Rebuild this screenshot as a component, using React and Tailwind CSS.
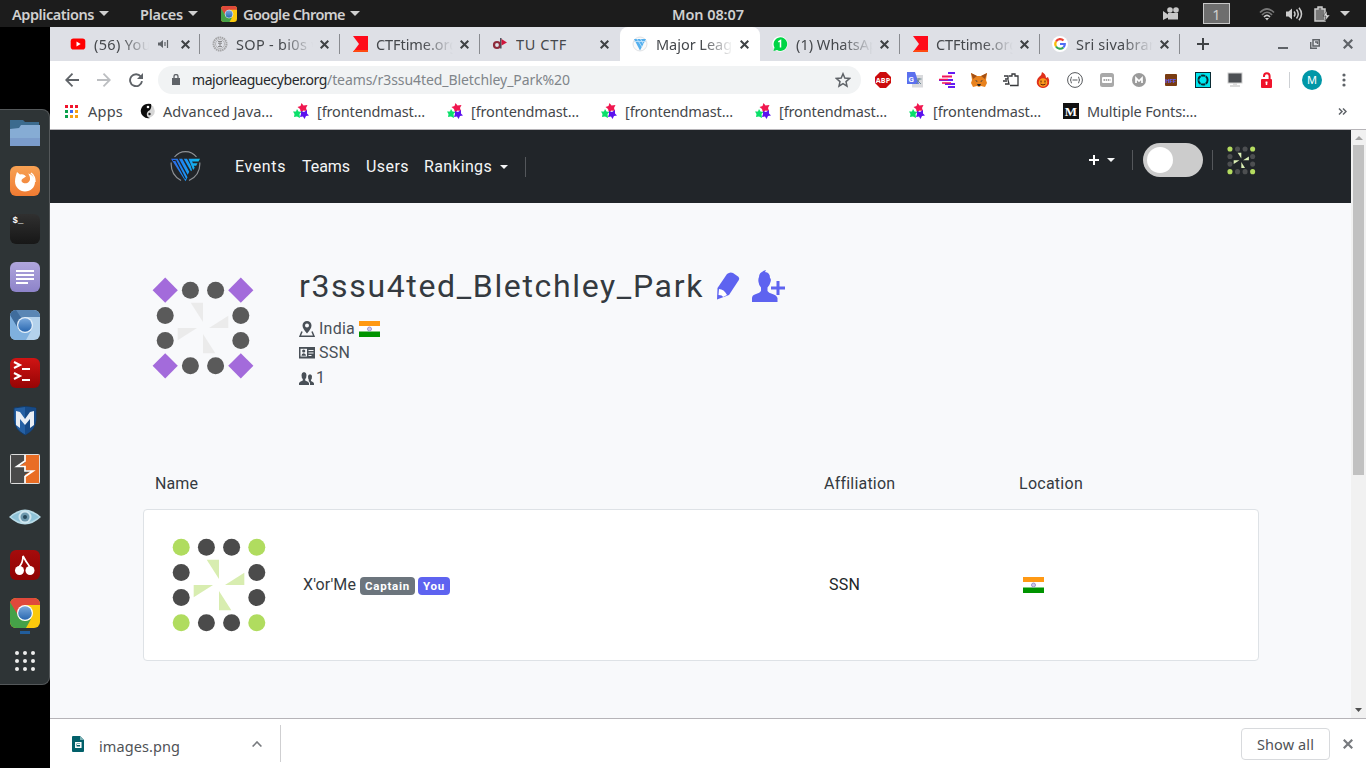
import { useLayoutEffect, useRef, useState } from "react";

/* Text tracked so that it spans the given width. */
function Fit({ w, className = "", children }) {
  const ref = useRef(null);
  const [ls, setLs] = useState(0);
  useLayoutEffect(() => {
    const natural = ref.current.getBoundingClientRect().width;
    const n = ref.current.textContent.length;
    setLs((prev) => prev + (w - natural) / n);
  }, [w]);
  return (
    <span className={"block shrink-0 whitespace-pre " + className} style={{ width: w }}>
      <span ref={ref} className="inline-block" style={{ letterSpacing: ls + "px" }}>{children}</span>
    </span>
  );
}

const Caret = ({ className = "", w = 10, h = 5 }) => (
  <svg className={"shrink-0 " + className} width={w} height={h} viewBox="0 0 10 5" preserveAspectRatio="none" fill="currentColor"><path d="M0 0h10L5 5z" /></svg>
);

const Cross = ({ size = 9, className = "", sw = 2 }) => (
  <svg className={"shrink-0 " + className} width={size} height={size} viewBox="0 0 9 9" stroke="currentColor" strokeWidth={sw} fill="none"><path d="M.7.7l7.6 7.6M8.3.7L.7 8.3" /></svg>
);

function ChromeLogo({ size, blue = false, id }) {
  const [r, g, y] = blue ? ["#5a86b4", "#7fb0de", "#b4d2ec"] : ["#e0493b", "#45a148", "#fbc90c"];
  return (
    <svg width={size} height={size} viewBox="0 0 30 30" className="shrink-0">
      <defs>
        <clipPath id={id}><rect width="30" height="30" rx="6" /></clipPath>
        <linearGradient id={id + "g"} x1="0" y1="0" x2="0" y2="1"><stop offset="0" stopColor="#7aa9dc" /><stop offset="1" stopColor="#2a68b0" /></linearGradient>
      </defs>
      <g clipPath={`url(#${id})`}>
        <rect width="30" height="30" fill={y} />
        <path d="M0 0h30v7H15L8 18 0 6z" fill={r} />
        <path d="M0 4l8.500 14L15 23l6-2-5 9H0z" fill={g} />
        {blue && <path d="M0 5l9 15 3-11L6 0H0z" fill="#3f6c9c" />}
      </g>
      <circle cx="15" cy="15" r="8" fill={blue ? "#e4eff9" : "#fff"} />
      <circle cx="15" cy="15" r="6.800" fill={`url(#${id}g)`} />
    </svg>
  );
}

function Identicon({ size, corner, dot, blade, diamond }) {
  const edge = [-37.800, -12.600, 12.600, 37.800];
  const cells = [];
  edge.forEach((x, i) => edge.forEach((y, j) => {
    const ci = i % 3 === 0, cj = j % 3 === 0;
    if (!ci && !cj) return;
    cells.push(ci && cj && diamond
      ? <path key={x + "," + y} d={`M${x} ${y - 12.6}l12.600 12.600l-12.600 12.600l-12.600 -12.600z`} fill={corner} />
      : <circle key={x + "," + y} cx={x} cy={y} r="8.500" fill={ci && cj ? corner : dot} />);
  }));
  return (
    <svg width={size} height={size} viewBox="-51 -51 102 102" className="shrink-0">
      {cells}
      {[0, 90, 180, 270].map((a) => <path key={a} d="M-12.300 -25.300H0V-6z" fill={blade} transform={`rotate(${a})`} />)}
    </svg>
  );
}

const Flag = ({ className = "" }) => (
  <svg width="21" height="16" viewBox="0 0 21 16" className={"shrink-0 " + className}>
    <rect width="21" height="16" fill="#fff" />
    <rect width="21" height="5" fill="#ff9914" />
    <rect y="10.500" width="21" height="5.500" fill="#009400" />
    <circle cx="10.500" cy="8" r="2" fill="#cfcae8" stroke="#9d94cf" strokeWidth="1" />
  </svg>
);

/* ---------- desktop panel ---------- */
function TopBar() {
  return (
    <div className="flex h-[27px] shrink-0 items-center bg-[#1c1c1c] pl-3 text-[14.500px] font-semibold text-[#d0d0d0]">
      <Fit w={82}>Applications</Fit><Caret className="ml-[5px]" />
      <Fit w={43} className="ml-[31px]">Places</Fit><Caret className="ml-[5px] mr-[23px]" />
      <ChromeLogo size={16} id="ct" />
      <Fit w={102} className="ml-[6px]">Google Chrome</Fit><Caret className="ml-[5px]" />
      <Fit w={72} className="ml-[312px]">Mon 08:07</Fit>
      <svg width="16" height="14" viewBox="0 0 16 14" fill="#c8c8c8" className="ml-[419px]"><circle cx="7" cy="3" r="2.800" /><circle cx="13" cy="3" r="2.800" /><path d="M5 6h10v6.500H5zM0 4l5 3.500v3L0 13z" /></svg>
      <div className="ml-6 flex h-[21px] w-[27px] items-center justify-center border border-[#c8c8c8] bg-[#6e6e6e] font-normal">1</div>
      <svg width="16" height="14" viewBox="0 0 16 14" fill="none" strokeWidth="1.700" className="ml-[29px]"><path d="M1 5.500Q8-1.500 15 5.500M3 8Q8 2.500 13 8" stroke="#777" /><path d="M5 10Q8 6.800 11 10" stroke="#ccc" /><path d="M6 11h4l-2 2.500z" fill="#ccc" /></svg>
      <svg width="17" height="14" viewBox="0 0 17 14" fill="none" stroke="#ccc" strokeWidth="1.500" className="ml-[11px]"><path d="M0 4.500h2.500L6 1.500v11L2.500 9.500H0z" fill="#ccc" stroke="none" /><path d="M8 4.500q2 2.500 0 5M10.500 2.500q3.500 4.500 0 9M13 .700q5 6.300 0 12.600" /></svg>
      <svg width="16" height="16" viewBox="0 0 16 16" className="ml-[11px]"><path d="M1 3h3V1h4v2h3v12H1z" fill="#777" stroke="#ccc" strokeWidth="1.500" /><path d="M13 5l-4 5h3l-1 5 5-6h-3z" fill="#ddd" stroke="#1c1c1c" strokeWidth=".5" /></svg>
      <Caret className="ml-[10px]" />
    </div>
  );
}

function Dock() {
  const box = "flex size-[30px] items-start overflow-hidden rounded-[6px]";
  return (
    <div className="flex w-[50px] shrink-0 flex-col bg-black pt-[82px]">
      <div className="flex h-[576px] flex-col items-center gap-[18px] rounded-r-lg border-y border-r border-[#54585a] bg-[#2e3436] pt-[8px]">
        <svg width="30" height="30" viewBox="0 0 30 30"><path d="M0 2h13l2 2h14v10H0z" fill="#3c6b8e" /><path d="M0 11l9-1 2-3h19v21H0z" fill="#86acd4" /><path d="M0 20h30v8H0z" fill="#7b9ccb" /></svg>
        <div className={box + " bg-linear-to-b from-[#f7a153] to-[#f07b32]"}>
          <svg width="30" height="30" viewBox="0 0 30 30"><path d="M7 6l3 2.500c3-1 5 .5 6 2l-3 2c-2 1-2 3.500.5 4.500 3.500 1 7-1 6.500-5-.3-2-1-3.500-2-4.500 4 1 7 4 7 8.500 0 5.500-4.500 9.500-10 9.500S5 21 5 15.500C5 12 6 9 7 6z" fill="#fff" /><path d="M21 7q4 3 4 9" stroke="#fff" strokeWidth="1.500" fill="none" /></svg>
        </div>
        <div className={box + " bg-linear-to-b from-[#303030] to-[#171717] pl-[3px] pt-[2px] font-['Liberation_Mono'] text-[9px] font-bold leading-[10px] text-white"}>$_</div>
        <div className={box + " flex-col gap-[2px] bg-linear-to-b from-[#b0a6dc] to-[#8d83c9] pl-[6px] pt-[8px]"}>
          <i className="h-[2px] w-[18px] bg-white" /><i className="h-[2px] w-[18px] bg-white" /><i className="h-[2px] w-[18px] bg-white" /><i className="h-[2px] w-3 bg-white" />
        </div>
        <ChromeLogo size={30} blue id="cb" />
        <div className={box + " bg-linear-to-b from-[#d01414] to-[#960505]"}>
          <svg width="30" height="30" viewBox="0 0 30 30" fill="none" stroke="#fff" strokeWidth="2"><path d="M4 4l6 3-6 3M12 11h8M4 15l6 3-6 3M12 22h8" /></svg>
        </div>
        <svg width="30" height="30" viewBox="0 0 30 30"><path d="M4 2q11-3 22 0v12q-1 10-11 15Q5 24 4 14z" fill="#2560a4" stroke="#133b68" /><path d="M15 1q6 0 11 1v12q-1 10-11 15z" fill="#174a87" /><path d="M6 19V5l4 1 5 7 5-7 4-1v14l-4 3v-9l-5 6-5-6v9z" fill="#e9eef5" /></svg>
        <svg width="30" height="30" viewBox="0 0 30 30"><rect x=".5" y=".5" width="29" height="29" rx="1" fill="#4a4a4a" /><path d="M15 .5h14.500v29H15v-9l7-4h-6l-1-4H9l6-4z" fill="#e96d25" /><path d="M15 1v6l-8 5.500h8V17h8l-8 5.500V29" fill="none" stroke="#fff" strokeWidth="1.700" /><rect x=".5" y=".5" width="29" height="29" rx="1" fill="none" stroke="#ddd" /></svg>
        <svg width="32" height="30" viewBox="0 0 32 30"><path d="M0 15Q16 0 32 15Q16 30 0 15z" fill="#b9dce8" /><path d="M2 15Q16 4 30 15Q16 26 2 15z" fill="#8fc3d8" /><circle cx="16" cy="15" r="6.500" fill="#cfe6ef" /><circle cx="16" cy="15" r="4.500" fill="#6d98ad" /><circle cx="16" cy="15" r="2" fill="#284a5c" /></svg>
        <div className={box + " bg-linear-to-b from-[#a50c0c] to-[#8f0303]"}>
          <svg width="30" height="30" viewBox="0 0 30 30"><path d="M9 17q4-4 4-11q3 6 7 11" fill="none" stroke="#fff" strokeWidth="1.700" /><circle cx="9.500" cy="20.500" r="4.500" fill="#fff" /><circle cx="20" cy="20.500" r="4.500" fill="#fff" /></svg>
        </div>
        <div className="relative size-[30px]">
          <ChromeLogo size={30} id="cd" />
          <i className="absolute left-[10px] top-[33px] h-[3px] w-[10px] bg-[#215d9c]" />
        </div>
        <div className="grid size-[30px] grid-cols-[repeat(3,4px)] place-content-center gap-[4px]">
          {Array.from({ length: 9 }, (_, i) => <i key={i} className="size-[4px] rounded-full bg-[#eee]" />)}
        </div>
      </div>
    </div>
  );
}

/* ---------- favicons ---------- */
const YouTube = () => <svg width="16" height="16" viewBox="0 0 16 16"><rect x=".7" y="2.500" width="14.600" height="11" rx="2.800" fill="#f00" /><path d="M6.500 5.500v5L10.700 8z" fill="#fff" /></svg>;
const Sop = () => <svg width="16" height="16" viewBox="0 0 16 16" fill="none"><circle cx="8" cy="8" r="6.500" stroke="#a4a4a6" strokeWidth="2" strokeDasharray="1.500 .6" /><circle cx="8" cy="8" r="4.500" stroke="#b5b5b7" /><path d="M6 5.500h4M8 5v6M6 10.500h4M6 7l2 1 2-1" stroke="#8c8c8e" /></svg>;
const CtfTime = () => <svg width="16" height="16" viewBox="0 0 16 16"><path d="M1 0h15v16H1l6-8z" fill="#ff0a1a" /><path d="M2.500 14H16v2H1z" fill="#ff4a12" /></svg>;
const Tu = () => <svg width="16" height="16" viewBox="0 0 16 16"><circle cx="5" cy="9" r="3" fill="none" stroke="#8d2a3a" strokeWidth="2.200" /><path d="M8.800 2v10.500" stroke="#4b4b55" strokeWidth="1.500" /><path d="M9.500 3l5.500 3.500-5.500 3z" fill="#d0163c" /></svg>;
const Mlc = () => <svg width="16" height="16" viewBox="0 0 16 16"><circle cx="8" cy="8" r="7" fill="#fafafa" stroke="#d8dade" strokeWidth=".8" /><path d="M2 3h12L8 14.500z" fill="#55b0ee" /><path d="M5 3l5 8M8.500 3l3 5M2 5.500h12" stroke="#bfe0f8" strokeWidth=".9" /></svg>;
const WhatsApp = () => <svg width="16" height="16" viewBox="0 0 16 16"><circle cx="8" cy="8" r="7.800" fill="#fff" /><path d="M1.500 15l1-3.500A6.800 6.800 0 1 1 5 14z" fill="#00d546" /><path d="M6.300 5.800L8.500 4.500v7" stroke="#fff" strokeWidth="1.500" fill="none" /></svg>;
const Google = () => <svg width="16" height="16" viewBox="0 0 16 16" fill="none" strokeWidth="2.200"><circle cx="8" cy="8" r="8" fill="#fff" /><path d="M11.500 4.500A4.800 4.800 0 0 0 4 5.500" stroke="#ea4335" /><path d="M4 5.500a4.800 4.800 0 0 0 0 5" stroke="#fbbc05" /><path d="M4 10.500a4.800 4.800 0 0 0 7.300 1" stroke="#34a853" /><path d="M11.300 11.500A4.500 4.500 0 0 0 12.800 8H8" stroke="#4f6df5" /></svg>;
const StarMark = () => (
  <svg width="16" height="16" viewBox="0 0 16 16" className="shrink-0">
    <path id="s" d="M8.500 0l2 2.500 4-.5-1.500 3 1 3-3.500-.5L8 9.500 7 6 4.500 4l3-1z" fill="#f0174f" />
    <path d="M4 6l1.500 2.500 3 .5-2 2 .5 4-3-1.500L1 14l.5-3L0 8.500 3 8.500z" fill="#0be06a" />
    <path d="M8 8l3 1 3-2v3.500l2 2-3 .5-1.500 3-1.500-2.500L7 14l1-3z" fill="#5b12ee" />
  </svg>
);

function Tab({ icon, text, w, active, sound, sep, first }) {
  return (
    <div className={"flex h-[34px] w-[140px] shrink-0 items-center " + (active ? "rounded-t-lg bg-white " : "") + (first ? "pl-[10px]" : "pl-[12px]")}>
      <div className="size-4 shrink-0">{icon}</div>
      <div className={"ml-2 shrink-0 overflow-hidden " + (sound ? "w-[55px] mask-r-from-50%" : text === "TU CTF" ? "w-[77px]" : "w-[77px] mask-r-from-60%")}><Fit w={w}>{text}</Fit></div>
      {sound && <svg width="11" height="10" viewBox="0 0 11 10" className="ml-[9px] mr-[12px] shrink-0" stroke="#5f6368" strokeWidth="1.200" fill="none"><path d="M0 3.500h2L5 1v8L2 6.500H0z" fill="#5f6368" stroke="none" /><path d="M7 3v4M9.500 1v8" /></svg>}
      <Cross className={"text-[#3f4245] " + (sound ? "" : "ml-[7px]")} />
      {sep && <i className="ml-auto h-5 w-px bg-[#898b90]" />}
    </div>
  );
}

function TabStrip() {
  return (
    <div className="flex h-[34px] shrink-0 items-center bg-[#dee0e6] pl-[10px] text-[14.500px] text-[#45484c]">
      <Tab first icon={<YouTube />} text="(56) You" w={57} sound sep />
      <Tab icon={<Sop />} text="SOP - bi0s wi" w={91} sep />
      <Tab icon={<CtfTime />} text="CTFtime.org" w={82} sep />
      <Tab icon={<Tu />} text="TU CTF" w={51} />
      <Tab icon={<Mlc />} text="Major Leagu" w={85} active />
      <Tab icon={<WhatsApp />} text="(1) WhatsAp" w={82} sep />
      <Tab icon={<CtfTime />} text="CTFtime.org" w={82} sep />
      <Tab icon={<Google />} text="Sri sivabran" w={82} sep />
      <svg width="12" height="12" viewBox="0 0 12 12" className="ml-[17px]" stroke="#3f4245" strokeWidth="2"><path d="M6 0v12M0 6h12" /></svg>
      <i className="ml-[69px] mt-2 h-[2px] w-[10px] bg-[#5f6368]" />
      <svg width="10" height="10" viewBox="0 0 10 10" className="ml-[22px]" fill="none" stroke="#5f6368" strokeWidth="1.500"><path d="M3 .7h6.300V7H3zM.7 3v6.300H7" /><path d="M5 3h2.500v2" /></svg>
      <Cross className="ml-[23px] text-[#5f6368]" size={10} />
    </div>
  );
}

const Ext = ({ children }) => <div className="flex w-8 shrink-0 items-center justify-center">{children}</div>;

function Toolbar() {
  return (
    <div className="flex h-[37px] shrink-0 items-center pl-[15px]">
      <svg width="14" height="14" viewBox="0 0 14 14" fill="none" stroke="#5f6368" strokeWidth="1.800"><path d="M14 7H1.500M7.500 .7L1.200 7l6.300 6.300" /></svg>
      <svg width="14" height="14" viewBox="0 0 14 14" fill="none" stroke="#bcbec1" strokeWidth="1.800" className="ml-[18px]"><path d="M0 7h12.500M6.500 .7L12.800 7l-6.300 6.300" /></svg>
      <svg width="14" height="14" viewBox="0 0 14 14" fill="none" stroke="#5f6368" strokeWidth="1.900" className="ml-[18px]"><path d="M11.800 3.500A6 6 0 1 0 13 8.200" /><path d="M14 0v6H8z" fill="#5f6368" stroke="none" /></svg>
      <div className="ml-[15px] flex h-7 w-[703px] items-center rounded-full bg-[#f1f3f4] pl-[14px] text-[14px] text-[#80858a]">
        <svg width="8" height="11" viewBox="0 0 8 11" className="mr-3"><path d="M0 4h8v7H0z" fill="#5f6368" /><path d="M2 4V2.500a2 2 0 0 1 4 0V4" fill="none" stroke="#5f6368" strokeWidth="1.300" /></svg>
        <Fit w={135} className="text-[#26282b]">majorleaguecyber.org</Fit><Fit w={243}>/teams/r3ssu4ted_Bletchley_Park%20</Fit>
        <svg width="16" height="16" viewBox="0 0 16 16" className="ml-[265px]" fill="none" stroke="#5f6368" strokeWidth="1.500"><path d="M8 1.800l1.800 4.300 4.700.4L11 9.600l1 4.500L8 11.700l-4 2.400 1-4.500L1.500 6.500l4.700-.4z" /></svg>
      </div>
      <div className="ml-[6px] flex">
        <Ext><svg width="16" height="16" viewBox="0 0 16 16"><path d="M5 0h6l5 5v6l-5 5H5l-5-5V5z" fill="#cc0b0d" /><text x="8" y="11" textAnchor="middle" fontSize="7.200" fontWeight="700" fill="#fff" fontFamily="Open Sans">ABP</text></svg></Ext>
        <Ext><svg width="16" height="16" viewBox="0 0 16 16"><rect x="5" y="3" width="11" height="12.500" fill="#d9dadd" /><path d="M0 0h8l4 12H0z" fill="#5b70ee" /><text x="1.500" y="9.500" fontSize="8" fontWeight="700" fill="#fff" fontFamily="Roboto">G</text><path d="M9.500 7h5M12 6v1q0 3-3 5M10 8l4 4" stroke="#6f8a93" fill="none" /></svg></Ext>
        <Ext><svg width="16" height="16" viewBox="0 0 16 16" strokeWidth="2"><path d="M9 1h7M9 15h7M6 12h10" stroke="#651df2" /><path d="M3 4.500h10" stroke="#f2145a" /><path d="M0 8h14" stroke="#651df2" /><path d="M3 11h9M0 7.500h9" stroke="#f2145a" strokeWidth="1.300" /></svg></Ext>
        <Ext><svg width="16" height="16" viewBox="0 0 16 16"><path d="M0 1l6 3h4l6-3-1 7 1 3-2 4-4-1-2 1-2-1-4 1-2-4 1-3z" fill="#e8821e" /><path d="M0 1l6 3-4 3zM16 1l-6 3 4 3z" fill="#a35016" /><path d="M4 8l2.500 1L6 10zM12 8L9.500 9l.5 1z" fill="#22344a" /><path d="M6 12h4l-1 2H7z" fill="#2b2b2b" /></svg></Ext>
        <Ext><svg width="16" height="14" viewBox="0 0 16 14" fill="none" stroke="#37393c" strokeWidth="1.300"><path d="M6 3h3V1h3v2h3v9.500H7M1 3h4v3H2M0 8h4M2 11h4l-1-4" /></svg></Ext>
        <Ext><svg width="14" height="16" viewBox="0 0 14 16"><path d="M6 0q0 3-3 5Q0 8 1 12q2 4 6 4t6-4q1-4-1-7l-2 1Q10 2 6 0z" fill="#e0301b" /><circle cx="7" cy="10.500" r="4.300" fill="#fb9b1e" /><path d="M5 8.500v2M9 8.500v2M4.500 12q2.500 2 5 0" stroke="#5b1906" fill="none" /></svg></Ext>
        <Ext><svg width="16" height="16" viewBox="0 0 16 16" fill="none" stroke="#55585c"><circle cx="8" cy="8" r="7.400" /><path d="M5 5q-1.200 0-1 1.500T3 8q1.200 0 1 1.500T5 11M11 5q1.200 0 1 1.500T13 8q-1.200 0-1 1.500T11 11M5.500 8h5" strokeDasharray="none" /></svg></Ext>
        <Ext><svg width="14" height="14" viewBox="0 0 14 14"><rect width="14" height="14" rx="2.500" fill="#a9a9a9" /><rect x="2" y="4" width="10" height="6" rx="1" fill="#fff" /><path d="M3.500 7h7" stroke="#a9a9a9" strokeWidth="2" strokeDasharray="1.500 .7" /></svg></Ext>
        <Ext><svg width="14" height="14" viewBox="0 0 14 14"><circle cx="7" cy="7" r="7" fill="#9b9b9b" /><path d="M4 10V5l3 3 3-3v5" stroke="#fff" strokeWidth="1.700" fill="none" /></svg></Ext>
        <Ext><svg width="12" height="12" viewBox="0 0 12 12"><rect width="12" height="12" rx="1" fill="#7a3c12" /><text x="6" y="8.500" textAnchor="middle" fontSize="6" fontWeight="700" fill="#5c5cf0" fontFamily="Roboto">HFF</text></svg></Ext>
        <Ext><svg width="16" height="16" viewBox="0 0 16 16"><rect x=".5" y=".5" width="15" height="15" fill="#00e5ee" stroke="#0b2b33" /><circle cx="8" cy="8" r="4.600" fill="none" stroke="#0b2b33" strokeWidth="2" strokeDasharray="4.200 .6" /></svg></Ext>
        <Ext><svg width="16" height="16" viewBox="0 0 16 16"><rect x="1" y="1" width="14" height="10" fill="#4d5054" stroke="#cfcfcf" /><path d="M6 11h4v2h3v2H3v-2h3z" fill="#dcdcdc" /></svg></Ext>
        <Ext><svg width="14" height="16" viewBox="0 0 14 16"><rect x="1" y="7" width="11" height="9" rx="1" fill="#f0142c" /><path d="M4 5V4a2.800 2.800 0 0 1 5.600 0v4" fill="none" stroke="#f0142c" strokeWidth="2" /><path d="M6.500 9.500v3.500M5.500 10.500h2" stroke="#fff" strokeWidth="1.500" /></svg></Ext>
      </div>
      <i className="ml-[6px] h-4 w-px bg-[#cdd0d4]" />
      <div className="ml-3 flex size-5 items-center justify-center rounded-full bg-[#0097a7] text-[11px] text-white">M</div>
      <svg width="4" height="14" viewBox="0 0 4 14" className="ml-[20px]" fill="#5f6368"><circle cx="2" cy="2" r="1.600" /><circle cx="2" cy="7" r="1.600" /><circle cx="2" cy="12" r="1.600" /></svg>
    </div>
  );
}

function Bookmarks() {
  const c = ["bg-[#f0142c]", "bg-[#f0142c]", "bg-[#f0142c]", "bg-[#0ba04c]", "bg-[#3f66f0]", "bg-[#f8a010]", "bg-[#0ba04c]", "bg-[#f8a010]", "bg-[#f8a010]"];
  return (
    <div className="flex h-[32px] shrink-0 items-center border-b border-[#b6b4b8] bg-white pb-[5px] pl-[15px] text-[14.500px] text-[#45484c]">
      <div className="grid grid-cols-[repeat(3,3px)] gap-[2px]">{c.map((k, i) => <i key={i} className={"size-[3px] " + k} />)}</div>
      <Fit w={35} className="ml-[10px]">Apps</Fit>
      <svg width="15" height="16" viewBox="0 0 15 16" className="ml-[17px]"><circle cx="8" cy="8" r="6.800" fill="#d6d6d6" /><path d="M11 1Q5 0 2 4q-3 5 1 9 3 3 7 2-4-1-3-5 .5-2 3-3Q12 4 11 1z" fill="#0c0c0c" /><circle cx="8" cy="4" r="1.300" fill="#fff" /><circle cx="9.500" cy="11" r="1.200" fill="#222" /></svg>
      <Fit w={110} className="ml-[8px] mr-[20px]">Advanced Java...</Fit>
      {[0, 1, 2, 3, 4].map((i) => (
        <div key={i} className="flex w-[154px] shrink-0 items-center gap-2"><StarMark /><Fit w={108}>[frontendmast...</Fit></div>
      ))}
      <div className="flex size-4 shrink-0 items-center justify-center bg-[#111] font-['Liberation_Serif'] text-[13px] font-bold leading-none text-white">M</div>
      <Fit w={110} className="ml-2">Multiple Fonts:...</Fit>
      <svg width="9" height="7" viewBox="0 0 9 7" className="ml-[141px]" fill="none" stroke="#5f6368" strokeWidth="1.500"><path d="M1 .5l3 3-3 3M5 .5l3 3-3 3" /></svg>
    </div>
  );
}

/* ---------- site ---------- */
function SiteHeader() {
  return (
    <div className="flex h-[73px] shrink-0 items-center bg-[#212529] pl-[120px] text-[16px] text-[#f4f5f6]">
      <svg width="31" height="32" viewBox="0 0 31 32">
        <defs><linearGradient id="lg" x1="0" x2="1"><stop offset="0" stopColor="#2f66e6" /><stop offset=".5" stopColor="#1b93f5" /><stop offset="1" stopColor="#10c0e8" /></linearGradient></defs>
        <path d="M4.500 6A14 14 0 0 1 26.500 6M1.200 11.500Q.500 24 11 29.500M29.800 11.500Q30.500 24 19 29.500" fill="none" stroke="#8d9094" strokeWidth="1.200" />
        <path d="M1 7.800h6.500l10 18.500-2 4zM9 7.800h3.200l7 13-1.500 3zM13.800 7.800H17l3.500 6.500 1.500 5-1 1zM18.500 7.800H30L28.500 10.500h-6.500l1 1.800h4.500l-1.300 2.400h-2.500l1 2-1.500 2.400z" fill="url(#lg)" />
        <path d="M5.500 9l10 19M3 9.500h2" stroke="#212529" strokeWidth="1.200" />
      </svg>
      <Fit w={51} className="ml-[34px]">Events</Fit>
      <Fit w={48} className="ml-4">Teams</Fit>
      <Fit w={43} className="ml-4">Users</Fit>
      <Fit w={68} className="ml-[15px]">Rankings</Fit>
      <Caret w={8} h={4} className="ml-2" />
      <i className="ml-[17px] h-5 w-px bg-[#54575b]" />
      <div className="mb-[13px] ml-[563px] flex items-center">
        <svg width="10" height="10" viewBox="0 0 10 10" stroke="#fff" strokeWidth="2"><path d="M5 0v10M0 5h10" /></svg>
        <Caret w={8} h={4} className="ml-2" />
        <i className="ml-[17px] h-5 w-px bg-[#54575b]" />
        <div className="ml-[10px] h-[34px] w-[60px] rounded-full bg-[#ccc] p-1"><div className="size-[26px] rounded-full bg-white" /></div>
        <i className="ml-[9px] mr-[13px] h-5 w-px bg-[#54575b]" />
        <Identicon size={30.600} corner="#b5dc60" dot="#4d4f51" blade="#dcefb5" />
      </div>
    </div>
  );
}

function TeamPage() {
  return (
    <div className="flex grow flex-col bg-[#f8f9fb] pl-[93px] text-[16px] leading-6 text-[#343a40]">
      <div className="flex pt-[63px]">
        <div className="ml-[9px] mt-[11px]"><Identicon size={102} corner="#a36bdb" dot="#5a5a5a" blade="#ebebeb" diamond /></div>
        <div className="ml-[45px] flex flex-col text-[#495057]">
          <div className="flex h-[40px] items-center text-[32px] leading-10 text-[#343a40]">
            <Fit w={405}>r3ssu4ted_Bletchley_Park</Fit>
            <svg width="24" height="28" viewBox="0 0 24 28" className="ml-3"><path d="M11 2Q14-.5 17 1l5 3.500Q24 6 22.500 8.500L13 23 1 27.500 1.500 16z" fill="#5e63f0" /><path d="M2.500 23l.5-6q5 0 8 6l-4 2q-.5-2-4.500-2z" fill="#fff" /></svg>
            <svg width="33" height="32" viewBox="0 0 33 32" className="ml-3" fill="#5e63f0"><path d="M7 7Q7 2 14 0l-1 2q5 .5 5 6 1.500 1 .5 4-1 4-3 5.500V21q1 2 5 3t5 4v4H0v-4q0-3 4-4t5-3v-3.500Q7 16 6.500 12 6 9 7 7z" /><path d="M24.500 11h3v5.500h5.500v3h-5.500V25h-3v-5.500H19v-3h5.500z" /></svg>
          </div>
          <div className="mt-[11px] flex h-6 items-center">
            <svg width="16" height="16" viewBox="0 0 16 16" className="mr-1"><path d="M8 0a4.500 4.500 0 0 1 4.500 4.500Q12.500 7.500 8 12.500 3.500 7.500 3.500 4.500A4.500 4.500 0 0 1 8 0zM8 2.500a2 2 0 1 0 0 4 2 2 0 1 0 0-4z" fill="#495057" fillRule="evenodd" /><path d="M3 10.500l-2 4.700h14l-2-4.700" fill="none" stroke="#495057" strokeWidth="1.500" /></svg>
            <Fit w={36}>India</Fit><Flag className="ml-1" />
          </div>
          <div className="flex h-6 items-center">
            <svg width="16" height="12" viewBox="0 0 16 12" className="mr-1"><rect width="16" height="11.500" fill="#495057" /><rect x="1.500" y="1.800" width="6.500" height="7.700" fill="#f8f9fb" /><circle cx="4.700" cy="4" r="1.600" fill="#495057" /><path d="M2.500 8.700q0-2.500 2.200-2.500T7 8.700z" fill="#495057" /><path d="M9.500 3.500h5M9.500 6h5M9.500 8.500h3" stroke="#f8f9fb" /></svg>
            <Fit w={31}>SSN</Fit>
          </div>
          <div className="flex h-[26px] items-center">
            <svg width="15" height="13" viewBox="0 0 15 13" className="mr-[2px]" fill="#495057"><path d="M2.500 3Q2.500.5 5 0q2.500.5 2.500 3 0 3-1.300 4v1.500Q9.500 9.500 10 11v2H0v-2q.5-1.500 3.800-2.500V7Q2.500 6 2.500 3z" /><path d="M9 4.500Q9 2.500 11 2.200q2 .3 2 2.300 0 2.500-1 3.300V9q3 1 3 2.500V13h-4v-2Q10.500 9.500 9.500 9l.5-1Q9 7 9 4.500z" /></svg>
            <span>1</span>
          </div>
        </div>
      </div>
      <div className="mt-[81px] flex h-[24px] pl-[12px]">
        <div className="w-[669px]"><Fit w={43}>Name</Fit></div>
        <div className="w-[195px]"><Fit w={70}>Affiliation</Fit></div>
        <Fit w={64}>Location</Fit>
      </div>
      <div className="mt-[13px] flex h-[152px] w-[1116px] items-center rounded border border-[#dee2e6] bg-white pl-6">
        <Identicon size={102} corner="#b0dc5f" dot="#4b4b4b" blade="#d8edb0" />
        <div className="ml-[33px] flex w-[526px] items-center">
          <Fit w={53}>X'or'Me</Fit>
          <span className="ml-1 mt-[2px] flex h-[18px] w-[55px] items-center rounded bg-[#6c757d] pl-[5px] text-[11.500px] font-bold text-white"><Fit w={45}>Captain</Fit></span>
          <span className="ml-[3px] mt-[2px] flex h-[18px] w-[32px] items-center rounded bg-[#5e63f0] pl-[5px] text-[11.500px] font-bold text-white"><Fit w={22}>You</Fit></span>
        </div>
        <div className="w-[194px] text-[#212529]"><Fit w={31}>SSN</Fit></div>
        <Flag />
      </div>
    </div>
  );
}

function DownloadShelf() {
  return (
    <div className="flex h-[50px] shrink-0 items-center border-t border-[#b6b4b8] bg-white pl-[22px] text-[14.500px] text-[#4f5256]">
      <svg width="12" height="16" viewBox="0 0 12 16"><path d="M1 0h7l4 4v11q0 1-1 1H1q-1 0-1-1V1q0-1 1-1z" fill="#02606a" /><path d="M8 0l4 4H8z" fill="#7ab0b4" /><path d="M3.800 6.800h5v4.500h-5z" fill="none" stroke="#fff" strokeWidth="1.500" /><path d="M5 8h3v1H5z" fill="#fff" /></svg>
      <Fit w={81} className="ml-[15px] mt-1">images.png</Fit>
      <svg width="10" height="6" viewBox="0 0 10 6" className="ml-[72px]" fill="none" stroke="#777a7e" strokeWidth="1.600"><path d="M.6 5.500L5 1l4.400 4.500" /></svg>
      <i className="ml-[18px] h-[37px] w-px bg-[#cfcfd1]" />
      <div className="ml-[960px] flex h-8 w-[89px] shrink-0 items-center rounded border border-[#d8dadd] pl-[15px]"><Fit w={57}>Show all</Fit></div>
      <Cross className="ml-[13px] text-[#777a7e]" size={10} />
    </div>
  );
}

export default function App() {
  return (
    <div className="flex h-[768px] w-[1366px] flex-col overflow-hidden bg-black font-['Noto_Sans',sans-serif] leading-5">
      <TopBar />
      <div className="flex h-[741px]">
        <Dock />
        <div className="flex w-[1316px] shrink-0 flex-col bg-white">
          <TabStrip />
          <Toolbar />
          <Bookmarks />
          <div className="flex h-[588px] shrink-0">
            <div className="flex w-[1301px] flex-col font-['Roboto',sans-serif]">
              <SiteHeader />
              <TeamPage />
            </div>
            <div className="flex w-[15px] flex-col items-center bg-[#f1f1f1]">
              <Caret w={8} h={4} className="mt-[6px] rotate-180 text-[#a3a3a3]" />
              <div className="mt-[5px] h-[330px] w-[11px] bg-[#c1c1c1]" />
              <Caret w={7} h={4} className="mb-[6px] mt-auto text-[#505050]" />
            </div>
          </div>
          <DownloadShelf />
        </div>
      </div>
    </div>
  );
}
